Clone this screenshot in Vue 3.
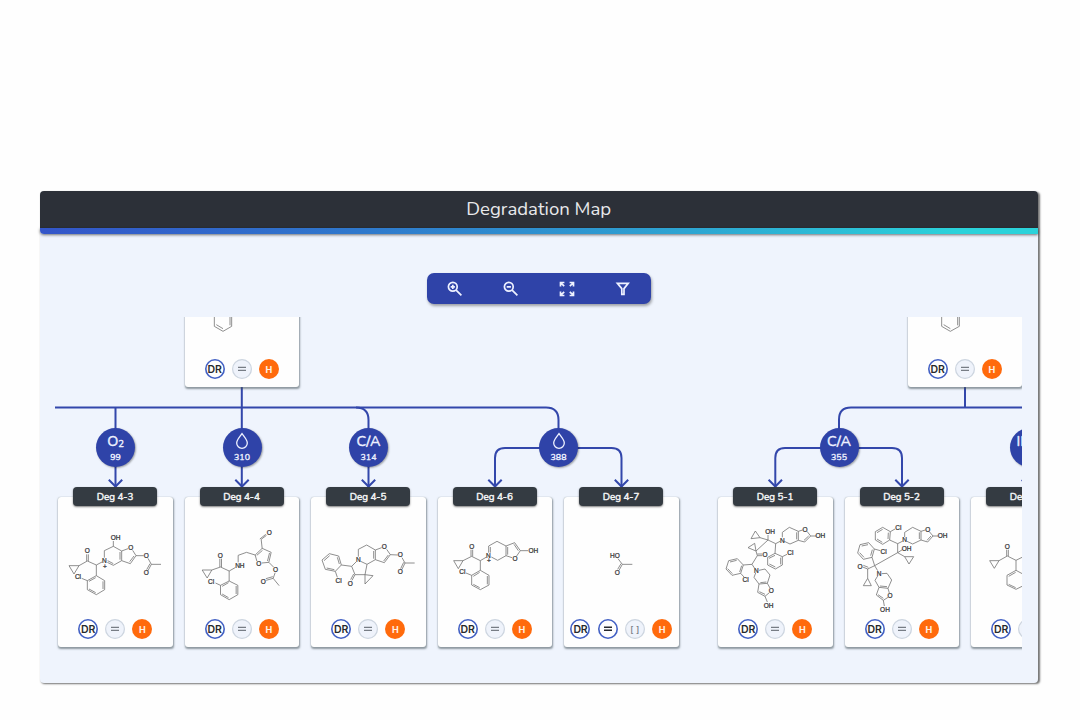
<template>
  <div class="page">
    <div class="panel">
      <header class="panel-header">
        <h1>Degradation Map</h1>
      </header>
      <div class="header-line"></div>

      <div class="toolbar">
        <button class="tool-btn" title="Zoom in">
          <svg width="16" height="16" viewBox="0 0 16 16">
            <circle cx="5.8" cy="5.8" r="4.4" />
            <path d="M9.1 9.1L14.4 14.4M5.8 3.7V7.9M3.7 5.8H7.9" />
          </svg>
        </button>
        <button class="tool-btn" title="Zoom out">
          <svg width="16" height="16" viewBox="0 0 16 16">
            <circle cx="5.8" cy="5.8" r="4.4" />
            <path d="M9.1 9.1L14.4 14.4M3.7 5.8H7.9" />
          </svg>
        </button>
        <button class="tool-btn" title="Fit to screen">
          <svg width="16" height="16" viewBox="0 0 16 16">
            <path d="M1.5 5.4V1.5H5.4M1.8 1.8L5.2 5.2M10.6 1.5H14.5V5.4M14.2 1.8L10.8 5.2M1.5 10.6V14.5H5.4M1.8 14.2L5.2 10.8M14.5 10.6V14.5H10.6M14.2 14.2L10.8 10.8" />
          </svg>
        </button>
        <button class="tool-btn" title="Filter">
          <svg width="16" height="16" viewBox="0 0 16 16">
            <path d="M2.4 2.3H13.2L9 7.6V13.4H6.8V7.6Z" />
          </svg>
        </button>
      </div>

      <div class="map">
        <svg class="connectors" viewBox="55 317 967 334">
          <path d="M55 407.5H546Q558.5 407.5 558.5 420V448" />
          <path d="M115.5 407.5V487M241.8 386V487" />
          <path d="M356 407.5Q368.5 407.5 368.5 420V487" />
          <path d="M558.5 448H505Q495 448 495 458V487M558.5 448H611.5Q621.5 448 621.5 458V487" />
          <path d="M1022 407.5H851Q839 407.5 839 419.5V448M965 386V407.5" />
          <path d="M839 448H785Q775.3 448 775.3 458V487M839 448H892Q902 448 902 458V487" />
          <path v-for="x in arrows" :key="x" :d="`M${x - 6.7} 479.8L${x} 486.5L${x + 6.7} 479.8`" />
        </svg>

        <div
          v-for="node in nodes"
          :key="node.x"
          class="node"
          :style="{ left: node.x - 74.5 + 'px' }"
        >
          <svg v-if="!node.label" class="drop" width="14" height="18" viewBox="0 0 14 18">
            <path d="M7 1.6C9.2 4.9 12.3 7.8 12.3 11A5.3 5.3 0 0 1 1.7 11C1.7 7.8 4.8 4.9 7 1.6Z" />
          </svg>
          <span v-else class="node-label">{{ node.label }}<sub v-if="node.sub">{{ node.sub }}</sub></span>
          <span class="node-count">{{ node.count }}</span>
        </div>

        <div
          v-for="card in cards"
          :key="card.x"
          class="card"
          :style="{ left: card.x - 55 + 'px', top: card.top - 317 + 'px' }"
        >
          <span v-if="card.name" class="card-name">{{ card.name }}</span>
          <svg class="molecule" :viewBox="`${card.origin} 0 345 333`">
            <path :d="card.bonds" />
            <text v-for="(atom, i) in card.atoms" :key="i" :x="atom[1]" :y="atom[2] + 7">{{ atom[0] }}</text>
          </svg>
          <div class="badges">
            <span class="badge dr">DR</span>
            <span class="badge" :class="{ active: card.equal }">
              <svg width="10" height="10" viewBox="0 0 10 10">
                <path d="M1 3.3H9M1 6.3H9" />
              </svg>
            </span>
            <span v-if="card.equal" class="badge">[ ]</span>
            <span class="badge hot">H</span>
          </div>
        </div>
      </div>
    </div>
  </div>
</template>

<script setup>
const arrows = [115.5, 242, 368.5, 495, 621.5, 775.3, 902, 1028.5]

const nodes = [
  { x: 115.5, label: 'O', sub: '2', count: 99 },
  { x: 242, count: 310 },
  { x: 368.5, label: 'C/A', count: 314 },
  { x: 558.5, count: 388 },
  { x: 839, label: 'C/A', count: 355 },
  { x: 1029, label: 'IMP', count: '' }
]

// bonds and atoms are in thirds of a pixel, starting at origin
const cards = [
  {
    x: 184.5, top: 237, origin: 0,
    bonds: 'M88 208V244L114 259L140 244V208L114 193ZM135 212V241M94 239L114 251',
    atoms: []
  },
  {
    x: 907.5, top: 237, origin: 0,
    bonds: 'M101 208V244L127 259L154 244V208L127 193ZM149 212V241M107 239L127 251',
    atoms: []
  },
  {
    x: 58, top: 497, origin: 24, name: 'Deg 4-3',
    bonds: 'M57 182H87L72 207ZM87 182L112 168L139 180L156 171M110 168V148M115 168V148M139 180V212M139 212L164 227V254L139 269L112 254V227ZM159 229V252M137 263L117 252M117 229L137 218M112 227L95 220M163 158V137L190 124L215 138V167L190 181L172 172M190 176L173 167M190 124V108M210 141V164M215 138L234 131M248 136L258 152L241 176L215 167M252 153L239 170M258 152H281M294 160L304 178H333M304 178L294 197M300 176L290 194',
    atoms: [['O', 112, 138], ['N', 163, 167], ['+', 165, 184], ['OH', 197, 98], ['O', 242, 129], ['O', 289, 152], ['O', 289, 204], ['Cl', 84, 215]]
  },
  {
    x: 184.5, top: 497, origin: 403.5, name: 'Deg 4-4',
    bonds: 'M455 195H484L470 219ZM484 195L510 186L536 198L554 188M508 186V161M513 186V161M536 198V228M536 228L562 241V269L536 284L510 269V241ZM557 243V267M534 278L515 267M515 244L534 233M510 241L495 234M563 172V151L588 142L614 150L635 130L662 142L655 172L634 174M619 168L614 150M619 151L636 136M657 144L651 168M635 130L632 103L648 91M628 102L646 88M655 172L669 186M674 203L668 220L686 242M668 220L647 226M667 215L646 221',
    atoms: [['O', 509, 151], ['NH', 568, 181], ['O', 625, 175], ['O', 656, 84], ['O', 675, 194], ['O', 638, 229], ['Cl', 482, 229]]
  },
  {
    x: 311, top: 497, origin: 18, name: 'Deg 4-5',
    bonds: 'M51 165L73 146L101 153L109 180L91 199L61 193ZM57 167L74 152M97 157L103 177M88 194L65 189M91 199L97 217M109 180L140 184L153 171M140 184L150 209L180 209L186 178L167 169M150 209L141 226M146 207L137 224M180 209L204 212L180 237ZM160 155V133L185 120L211 135V164L186 178M206 138V161M211 135L230 128M245 133L256 149L238 173L211 164M250 150L236 168M256 149L278 150M291 158L300 174H329M300 174L291 193M296 172L287 191',
    atoms: [['N', 160, 165], ['O', 238, 126], ['O', 286, 150], ['O', 286, 201], ['O', 136, 235], ['Cl', 101, 228]]
  },
  {
    x: 437.5, top: 497, origin: 398, name: 'Deg 4-6',
    bonds: 'M445 167H473L459 191ZM473 167L499 154L525 167L542 157M497 154V134M502 154V134M525 167V196M525 196L551 211V240L525 254L499 240V211ZM546 213V238M523 248L504 238M504 214L523 202M499 211L482 204M550 143V123L575 109L602 123V152L577 166L558 156M555 143V126M602 123L628 113L645 137L634 153M626 118L639 137M620 158L602 152M607 126V149M645 137H668',
    atoms: [['O', 499, 124], ['N', 549, 151], ['+', 551, 168], ['O', 629, 161], ['OH', 684, 137], ['Cl', 471, 200]]
  },
  {
    x: 564, top: 497, origin: 43, name: 'Deg 4-7', equal: true,
    bonds: 'M205 161L218 178H248M218 178L208 196M214 176L204 193',
    atoms: [['HO', 196, 153], ['O', 203, 203]]
  },
  {
    x: 718, top: 497, origin: 504, name: 'Deg 5-1',
    bonds: 'M603 101L630 98L616 78ZM630 98L654 105V90M654 105L677 116L690 109M654 105L618 138M618 138L594 128L614 115ZM618 138L622 152H637M622 147H637M622 152L606 178L580 180M580 180L572 205L546 211L528 192L536 167L562 161ZM540 171L560 166M575 182L569 201M547 206L533 191M572 205L582 216M606 178L614 190M627 196L645 192L660 210L652 235L627 237L612 217L617 204M631 233L649 231M652 235L660 249M658 263L645 274L623 262L627 237M628 260L645 268M645 274L652 291M697 97V82L718 67L745 79V106L720 117L703 109M740 82V103M745 79L758 75M771 79L782 93L764 111L745 106M776 93L762 106M782 93H798M677 116L675 145M675 145L697 155V180L676 192L653 180V157ZM692 158V178M676 186L658 177M657 160L675 151M697 155L711 148',
    atoms: [['OH', 660, 81], ['N', 697, 106], ['O', 765, 73], ['OH', 811, 93], ['O', 645, 149], ['Cl', 721, 144], ['Cl', 587, 225], ['N', 619, 197], ['O', 664, 257], ['OH', 656, 301]]
  },
  {
    x: 844.5, top: 497, origin: 29, name: 'Deg 5-2',
    bonds: 'M120 80L142 67L165 80L163 105L142 118L120 105ZM125 83L142 73M159 83L158 102M141 112L125 102M165 80L179 72M163 105L187 116L201 109M208 96V82L232 67L257 79V105L232 117L215 109M252 82V102M257 79L270 75M282 80L293 93L277 111L257 105M287 93L275 106M293 93H308M187 116V143L201 134M187 143L208 155H235L221 177L208 155M187 143L118 182L110 157M110 157L84 163L67 144L74 119L100 113L117 132ZM79 123L98 119M111 134L106 152M86 157L73 143M117 132L135 137M118 182L97 192L82 186M99 187L84 181M97 192V220L84 242H108L97 220M118 182L127 197M139 206L155 205L169 225L158 250L131 247L119 226L127 213M134 243L155 245M158 250L162 264M158 277L144 286L123 270L131 247M128 269L144 280M144 286L147 303',
    atoms: [['Cl', 189, 68], ['N', 208, 105], ['O', 277, 74], ['OH', 322, 93], ['OH', 214, 131], ['Cl', 145, 139], ['O', 74, 184], ['N', 131, 206], ['O', 164, 272], ['OH', 149, 313]]
  },
  {
    x: 971, top: 497, origin: 409, name: 'Deg 5-3',
    bonds: 'M465 167H493L479 190ZM493 167L518 153L544 166L562 157M516 153V134M521 153V134M544 166V196M544 196L570 210V240L544 253L517 240V211ZM522 214L543 202M522 238L543 248',
    atoms: [['O', 518, 124]]
  }
]
</script>

<style>
body {
  background: #fefefe;
}
</style>

<style scoped>
.page {
  box-sizing: border-box;
  height: 720px;
  padding: 191px 42px 0 39.5px;
  font-family: Nunito, "Open Sans", "Noto Sans", sans-serif;
}

.panel {
  height: 492px;
  background: #eff4fd;
  border-radius: 4px;
  box-shadow: 1.5px 1px 2px rgba(0, 0, 0, 0.55);
}

.panel-header {
  display: flex;
  align-items: center;
  justify-content: center;
  height: 37px;
  background: #2c3038;
  border-radius: 4px 4px 0 0;
}

.panel-header h1 {
  margin: 0;
  padding-bottom: 1px;
  font-size: 18.6px;
  font-weight: 400;
  line-height: 35px;
  color: #e8e9eb;
}

.header-line {
  height: 6px;
  background: linear-gradient(90deg, #3355c9, #2f78cc 32%, #2da5d2 65%, #2bd2da 92%);
  border-bottom-left-radius: 4px;
  box-shadow: 0 1px 3px rgba(0, 0, 0, 0.55);
}

.toolbar {
  display: flex;
  width: 224px;
  height: 31px;
  margin: 39px auto 13px;
  background: #2f43a8;
  border-radius: 7px;
  box-shadow: 1px 2px 3px rgba(0, 0, 0, 0.35);
}

.tool-btn {
  display: flex;
  flex: 1;
  align-items: center;
  justify-content: center;
  padding: 0;
  border: none;
  background: none;
  cursor: pointer;
}

.tool-btn svg {
  fill: none;
  stroke: #eef1ff;
  stroke-width: 1.7;
}

.map {
  position: relative;
  height: 334px;
  margin: 0 16px 0 15.5px;
  overflow: hidden;
}

.connectors {
  display: block;
  width: 967px;
  height: 334px;
  fill: none;
  stroke: #3347ab;
  stroke-width: 2;
}

.node {
  position: absolute;
  top: 111px;
  display: flex;
  flex-direction: column;
  align-items: center;
  width: 39px;
  height: 39px;
  background: #2f43a8;
  border-radius: 50%;
  box-shadow: 1px 1px 2px rgba(0, 0, 0, 0.35);
  color: #eef1ff;
}

.node-label {
  height: 22px;
  font-size: 14.4px;
  line-height: 26px;
  -webkit-text-stroke: 0.4px #eef1ff;
}

.node-label sub {
  font-size: 9.5px;
  line-height: 0;
  vertical-align: -1px;
}

.drop {
  height: 18px;
  margin: 3.5px 0 0.5px;
  fill: none;
  stroke: #eef1ff;
  stroke-width: 1.3;
}

.node-count {
  font-size: 8.8px;
  line-height: 15px;
  -webkit-text-stroke: 0.35px #eef1ff;
}

.card {
  position: absolute;
  box-sizing: border-box;
  width: 114.5px;
  height: 149.5px;
  padding-top: 8px;
  background: #fefefe;
  border-radius: 3px;
  box-shadow: 0 0 1px #9aa5ae, 0.5px 1.5px 2px rgba(60, 75, 80, 0.55);
}

.card-name {
  position: absolute;
  top: -10px;
  left: 15px;
  width: 84px;
  height: 19px;
  background: #343b42;
  border-radius: 4px;
  box-shadow: 0 1px 2px rgba(0, 0, 0, 0.5);
  color: #f2f3f4;
  font-size: 9.8px;
  line-height: 20px;
  text-align: center;
  -webkit-text-stroke: 0.45px #f2f3f4;
}

.molecule {
  display: block;
  width: 115px;
  height: 111px;
}

.molecule path {
  fill: none;
  stroke: #6d6d6d;
  stroke-width: 2.3;
}

.molecule text {
  fill: #333;
  font-family: "Liberation Sans", sans-serif;
  font-size: 19.5px;
  stroke: #333;
  stroke-width: 0.7;
  text-anchor: middle;
}

.badges {
  display: flex;
  justify-content: center;
  gap: 7.2px;
  margin-top: 3px;
}

.badge {
  display: flex;
  flex: none;
  align-items: center;
  justify-content: center;
  box-sizing: border-box;
  width: 20px;
  height: 20px;
  background: #eff3fb;
  border-radius: 50%;
  box-shadow: inset 0 0 0 1.2px #cdd5df;
  color: #777d85;
  font-family: Inter, Roboto, sans-serif;
  font-size: 9px;
  font-weight: 500;
}

.badge svg {
  stroke: currentColor;
  stroke-width: 1.2;
}

.badge.dr,
.badge.active {
  background: #fefefe;
  box-shadow: inset 0 0 0 1.6px #4260c4;
  color: #26292e;
}

.badge.dr {
  font-size: 10.5px;
  font-weight: 600;
  letter-spacing: -0.2px;
}

.badge.active svg {
  stroke-width: 1.5;
}

.badge.hot {
  background: #ff6a0c;
  box-shadow: none;
  color: #fff0e4;
  font-weight: 700;
}
</style>
